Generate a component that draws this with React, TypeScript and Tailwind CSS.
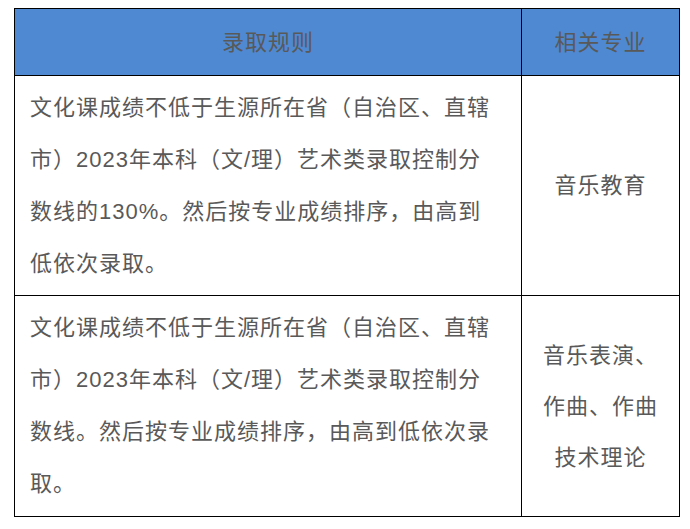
const rows = [
  {
    rule: [
      "文化课成绩不低于生源所在省（自治区、直辖",
      "市）2023年本科（文/理）艺术类录取控制分",
      "数线的130%。然后按专业成绩排序，由高到",
      "低依次录取。",
    ],
    major: ["音乐教育"],
  },
  {
    rule: [
      "文化课成绩不低于生源所在省（自治区、直辖",
      "市）2023年本科（文/理）艺术类录取控制分",
      "数线。然后按专业成绩排序，由高到低依次录",
      "取。",
    ],
    major: ["音乐表演、", "作曲、作曲", "技术理论"],
  },
];

export default function App() {
  return (
    <div className="h-[529px] w-[690px] bg-white pl-[14px] pt-[8px] font-['Liberation_Sans','Noto_Sans_CJK_SC',sans-serif] text-[22px] tracking-[1px] text-[#595959]">
      <div className="w-[666px] border border-black">
        <div className="grid h-[67px] grid-cols-[507px_1fr] border-b border-black bg-[#4f89d2]">
          <div className="flex items-center justify-center border-r border-black">录取规则</div>
          <div className="flex items-center justify-center">相关专业</div>
        </div>
        {rows.map((row, i) => (
          <div
            key={i}
            className={`grid h-[220px] grid-cols-[507px_1fr] ${i === 0 ? "border-b border-black" : ""}`}
          >
            <div className="flex flex-col justify-center border-r border-black pl-[15px] leading-[52px]">
              {row.rule.map((line, j) => (
                <span key={j} className="whitespace-nowrap">
                  {line}
                </span>
              ))}
            </div>
            <div className="flex flex-col items-center justify-center leading-[51px]">
              {row.major.map((line, j) => (
                <span key={j} className="whitespace-nowrap">
                  {line}
                </span>
              ))}
            </div>
          </div>
        ))}
      </div>
    </div>
  );
}
